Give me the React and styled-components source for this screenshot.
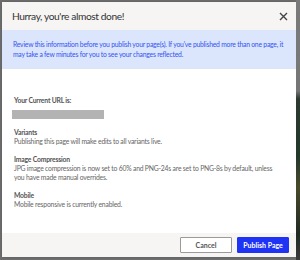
import React from "react";
import styled, { createGlobalStyle } from "styled-components";

const GlobalStyle = createGlobalStyle`
  html, body {
    margin: 0;
    padding: 0;
    background: #6f6f6f;
  }
  body {
    font-family: Lato, "Open Sans", sans-serif;
  }
`;

const App = () => {
  return (
    <>
      <GlobalStyle />
      <Backdrop>
        <Modal>
          <Header>
            <Title>Hurray, you're almost done!</Title>
            <CloseButton aria-label="Close">
              <svg width="9" height="9" viewBox="0 0 9 9">
                <path d="M1 1L8 8M8 1L1 8" stroke="#444" strokeWidth="1.4" />
              </svg>
            </CloseButton>
          </Header>
          <Notice>
            Review this information before you publish your page(s). If you've
            published more than one page, it may take a few minutes for you to
            see your changes reflected.
          </Notice>
          <Body>
            <Section>
              <Label>Your Current URL is:</Label>
              <UrlBar />
            </Section>
            <Section>
              <Label>Variants</Label>
              <Text>Publishing this page will make edits to all variants live.</Text>
            </Section>
            <Section>
              <Label>Image Compression</Label>
              <Text>
                JPG image compression is now set to 60% and PNG-24s are set to
                PNG-8s by default, unless you have made manual overrides.
              </Text>
            </Section>
            <Section>
              <Label>Mobile</Label>
              <Text>Mobile responsive is currently enabled.</Text>
            </Section>
          </Body>
          <Footer>
            <Button>Cancel</Button>
            <Button $primary>Publish Page</Button>
          </Footer>
        </Modal>
        <Behind />
      </Backdrop>
    </>
  );
};
export default App;

const Backdrop = styled.div`
  display: flex;
  width: 300px;
  height: 260px;
  padding: 2px 0 0 2px;
  box-sizing: border-box;
  overflow: hidden;
`;

const Behind = styled.div`
  flex: 1;
  margin-top: -2px;
  background: linear-gradient(
    180deg,
    #7a7a7a 0%,
    #767676 35%,
    #2c3a30 38%,
    #23372b 60%,
    #4a4a2a 72%,
    #1f2a22 90%,
    #3a3a3a 100%
  );
`;

const Modal = styled.div`
  width: 294px;
  height: 255px;
  background: #fff;
  display: flex;
  flex-direction: column;
  box-shadow: 0 0 3px rgb(0 0 0 / 20%);
`;

const Header = styled.div`
  height: 28px;
  background: #f6f5f3;
  display: flex;
  align-items: center;
  justify-content: space-between;
  padding: 0 8px 0 10px;
  flex-shrink: 0;
`;

const Title = styled.h1`
  margin: 0;
  font-size: 10.2px;
  letter-spacing: -0.4px;
  font-weight: 400;
  color: #333;
`;

const CloseButton = styled.button`
  border: 0;
  background: none;
  padding: 0;
  display: flex;
  cursor: pointer;
`;

const Notice = styled.div`
  background: #dbe6fd;
  color: #3553f0;
  font-size: 6.8px;
  letter-spacing: -0.22px;
  line-height: 10px;
  padding: 9px 12px 10px 11px;
  flex-shrink: 0;
`;

const Body = styled.div`
  flex: 1;
  padding: 27px 14px 0 12px;
  display: flex;
  flex-direction: column;
  gap: 9px;
`;

const Section = styled.div`
  display: flex;
  flex-direction: column;
`;

const Label = styled.div`
  font-size: 6.8px;
  letter-spacing: -0.2px;
  line-height: 9px;
  font-weight: 700;
  color: #555;
`;

const Text = styled.div`
  font-size: 6.8px;
  letter-spacing: -0.2px;
  line-height: 9px;
  color: #666;
`;

const UrlBar = styled.div`
  width: 92px;
  height: 9px;
  margin: 5px 0 0 -2px;
  background: #b3b3b3;
`;

const Footer = styled.div`
  height: 24px;
  background: #f6f5f3;
  display: flex;
  align-items: center;
  justify-content: flex-end;
  gap: 5px;
  padding: 0 7px 0 9px;
  flex-shrink: 0;
`;

const Button = styled.button`
  height: 16px;
  width: 52px;
  padding: 0;
  font-family: inherit;
  font-size: 7px;
  font-weight: 700;
  border-radius: 1px;
  cursor: pointer;
  border: 1px solid ${(p) => (p.$primary ? "#1f33f5" : "#9a9a9a")};
  background: ${(p) => (p.$primary ? "#1f33f5" : "#fff")};
  color: ${(p) => (p.$primary ? "#fff" : "#555")};
`;
